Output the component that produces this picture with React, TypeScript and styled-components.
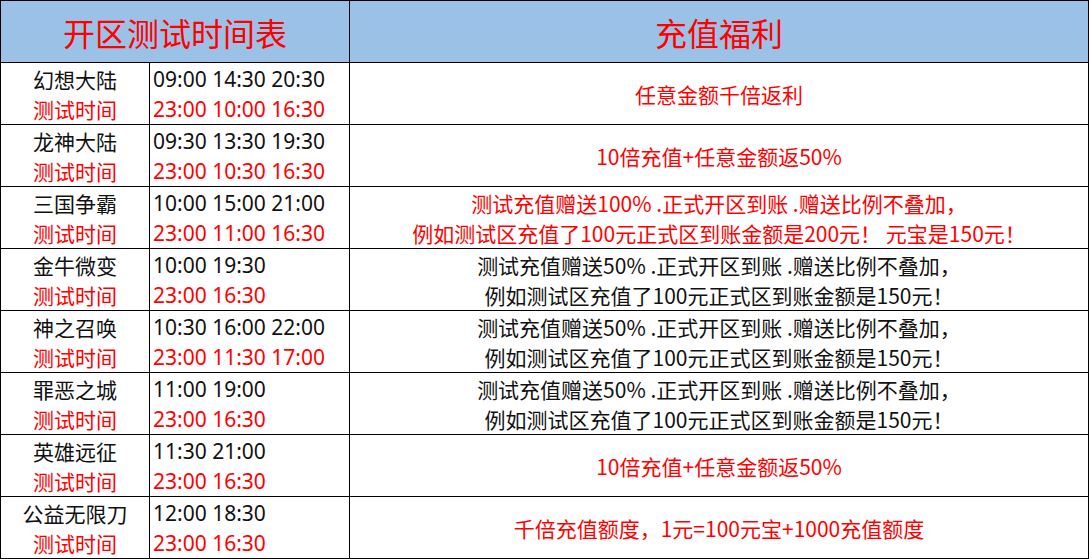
import React from "react";
import styled, { createGlobalStyle } from "styled-components";

const Global = createGlobalStyle`
  html, body { margin: 0; padding: 0; background: #ffffff; }
  body { font-family: "Noto Sans CJK SC", "Noto Sans", sans-serif; }
`;

const Table = styled.div`
  display: grid;
  grid-template-columns: 148px 199px 738px;
  grid-auto-rows: 61px;
  gap: 1px;
  padding: 1px;
  width: 1089px;
  box-sizing: border-box;
  background: #000000;
`;

const HeaderCell = styled.div<{ $span?: number }>`
  grid-column: span ${(p) => p.$span ?? 1};
  background: #9bc2e6;
  color: #ff0000;
  font-size: 32px;
  display: flex;
  align-items: center;
  justify-content: center;
  line-height: 1;
`;

const Cell = styled.div<{ $align?: "left" | "center"; $latin?: boolean }>`
  background: #ffffff;
  display: flex;
  flex-direction: column;
  justify-content: center;
  align-items: ${(p) => (p.$align === "left" ? "flex-start" : "center")};
  padding-left: ${(p) => (p.$align === "left" ? "3px" : "0")};
  font-family: ${(p) =>
    p.$latin
      ? '"Noto Sans", "Noto Sans CJK SC", sans-serif'
      : '"Noto Sans CJK SC", "Noto Sans", sans-serif'};
  font-size: 21px;
  line-height: 30px;
  white-space: nowrap;
  overflow: hidden;
`;

const Line = styled.span<{ $red?: boolean }>`
  color: ${(p) => (p.$red ? "#ff0000" : "#111111")};
`;

type Row = {
  name: string;
  open: string;
  test: string;
  bonus: string[];
  red: boolean;
};

const longBlack = [
  "测试充值赠送50% .正式开区到账 .赠送比例不叠加，",
  "例如测试区充值了100元正式区到账金额是150元！",
];

const rows: Row[] = [
  { name: "幻想大陆", open: "09:00 14:30 20:30", test: "23:00 10:00 16:30", bonus: ["任意金额千倍返利"], red: true },
  { name: "龙神大陆", open: "09:30 13:30 19:30", test: "23:00 10:30 16:30", bonus: ["10倍充值+任意金额返50%"], red: true },
  {
    name: "三国争霸",
    open: "10:00 15:00 21:00",
    test: "23:00 11:00 16:30",
    bonus: [
      "测试充值赠送100% .正式开区到账 .赠送比例不叠加，",
      "例如测试区充值了100元正式区到账金额是200元！ 元宝是150元！",
    ],
    red: true,
  },
  { name: "金牛微变", open: "10:00 19:30", test: "23:00 16:30", bonus: longBlack, red: false },
  { name: "神之召唤", open: "10:30 16:00 22:00", test: "23:00 11:30 17:00", bonus: longBlack, red: false },
  { name: "罪恶之城", open: "11:00 19:00", test: "23:00 16:30", bonus: longBlack, red: false },
  { name: "英雄远征", open: "11:30 21:00", test: "23:00 16:30", bonus: ["10倍充值+任意金额返50%"], red: true },
  { name: "公益无限刀", open: "12:00 18:30", test: "23:00 16:30", bonus: ["千倍充值额度，1元=100元宝+1000充值额度"], red: true },
];

export default function App() {
  return (
    <>
      <Global />
      <Table>
        <HeaderCell $span={2}>开区测试时间表</HeaderCell>
        <HeaderCell>充值福利</HeaderCell>
        {rows.map((r) => (
          <React.Fragment key={r.name}>
            <Cell>
              <Line>{r.name}</Line>
              <Line $red>测试时间</Line>
            </Cell>
            <Cell $align="left" $latin>
              <Line>{r.open}</Line>
              <Line $red>{r.test}</Line>
            </Cell>
            <Cell>
              {r.bonus.map((b, i) => (
                <Line key={i} $red={r.red}>
                  {b}
                </Line>
              ))}
            </Cell>
          </React.Fragment>
        ))}
      </Table>
    </>
  );
}
